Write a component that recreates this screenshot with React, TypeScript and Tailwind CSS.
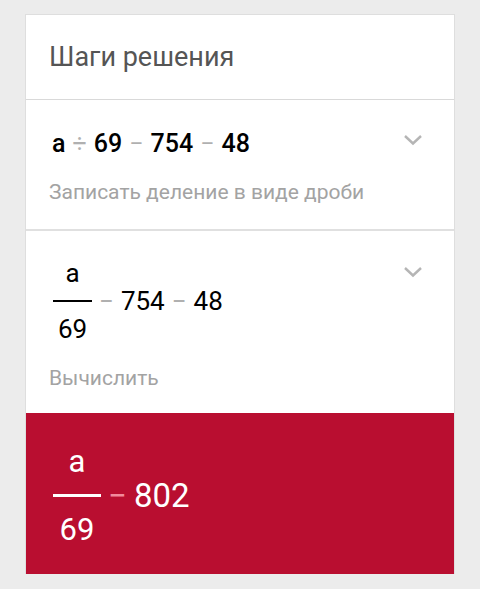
import React from 'react';

function Chevron() {
  return (
    <svg width="20" height="12" viewBox="0 0 20 12" className="shrink-0">
      <path d="M2 2 L10 9.5 L18 2" fill="none" stroke="#b5b5b5" strokeWidth="2.4" />
    </svg>
  );
}

function Op({ children, className = 'text-[#b0b0b0]' }: { children: React.ReactNode; className?: string }) {
  return <span className={`mx-[7px] font-normal ${className}`}>{children}</span>;
}

export default function App() {
  return (
    <div className="w-[480px] h-[589px] bg-[#ececec] pt-[14px] px-[25px] font-['Roboto',sans-serif]">
      <div className="bg-white border border-[#dedede] border-b-0">
        <div className="h-[85px] flex items-center px-[23px] border-b border-[#d9d9d9]">
          <span className="text-[27px] text-[#555] leading-none">Шаги решения</span>
        </div>

        <div className="h-[131px] px-[23px] pt-[31px] border-b-2 border-[#e0e0e0]">
          <div className="flex items-start justify-between pr-[8px]">
            <div className="flex items-center text-[25px] font-medium text-black leading-none pl-[3px]">
              <span>a</span>
              <Op>÷</Op>
              <span>69</span>
              <Op>−</Op>
              <span>754</span>
              <Op>−</Op>
              <span>48</span>
            </div>
            <div className="mt-[3px]">
              <Chevron />
            </div>
          </div>
          <div className="mt-[26px] text-[21px] text-[#a3a3a3] leading-none">Записать деление в виде дроби</div>
        </div>

        <div className="h-[182px] px-[23px] pt-[29px]">
          <div className="flex items-start justify-between pr-[8px]">
            <div className="flex items-center text-[26px] text-black leading-none pl-[4px]">
              <div className="flex flex-col items-center w-[39px]">
                <span className="mb-[14px]">a</span>
                <div className="w-[39px] h-[2px] bg-black" />
                <span className="mt-[14px]">69</span>
              </div>
              <Op>−</Op>
              <span>754</span>
              <Op>−</Op>
              <span>48</span>
            </div>
            <div className="mt-[6px]">
              <Chevron />
            </div>
          </div>
          <div className="mt-[26px] text-[21px] text-[#a3a3a3] leading-none">Вычислить</div>
        </div>

        <div className="h-[161px] bg-[#b90e30] px-[23px] pt-[33px]">
          <div className="flex items-center text-[33px] text-white leading-none pl-[4px]">
            <div className="flex flex-col items-center w-[48px] text-[31px]">
              <span className="mb-[17px]">a</span>
              <div className="w-[48px] h-[3px] bg-white" />
              <span className="mt-[17px]">69</span>
            </div>
            <Op className="text-[#f28a9c]">−</Op>
            <span>802</span>
          </div>
        </div>
      </div>
    </div>
  );
}
